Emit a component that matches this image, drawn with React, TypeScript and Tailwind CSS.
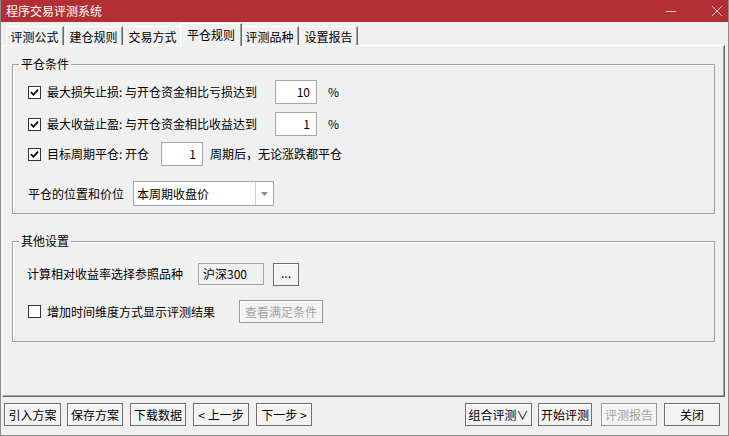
import React from "react"

const tabs = ["评测公式", "建仓规则", "交易方式", "平仓规则", "评测品种", "设置报告"]

function CheckBox({ checked }: { checked: boolean }) {
  return (
    <span className="flex h-[13px] w-[13px] shrink-0 items-center justify-center border border-[#333333] bg-white">
      {checked && (
        <svg width="9" height="9" viewBox="0 0 9 9">
          <path d="M1 4.2 L3.4 6.8 L8 1.6" fill="none" stroke="#000" strokeWidth="1.7" />
        </svg>
      )}
    </span>
  )
}

function NumBox({ value, className = "" }: { value: string; className?: string }) {
  return (
    <div
      className={`flex h-[24px] w-[42px] items-center justify-end border border-[#a6a6a6] bg-white pr-[6px] ${className}`}
    >
      {value}
    </div>
  )
}

function Btn({
  label,
  width,
  disabled,
  className = "",
}: {
  label: React.ReactNode
  width: string
  disabled?: boolean
  className?: string
}) {
  return (
    <button
      type="button"
      className={`flex h-[23px] items-center justify-center border bg-[#f3f3f3] leading-none shadow-[inset_1px_1px_0_#ffffff] ${width} ${
        disabled ? "border-[#9a9a9a] text-[#a3a3a3]" : "border-[#6e6e6e] text-black"
      } ${className}`}
    >
      {label}
    </button>
  )
}

export default function App() {
  return (
    <div className="flex h-[436px] w-[729px] flex-col border-b border-l border-r border-[#8c8c8c] bg-[#f0f0f0] font-['Noto_Sans_CJK_SC','Microsoft_YaHei',sans-serif] text-[12px] leading-none text-black">
      {/* Title bar */}
      <div className="flex h-[22px] shrink-0 items-center bg-[#b42f35] pl-[5px] pr-[4px] text-white">
        <span className="flex-1">程序交易评测系统</span>
        <svg width="12" height="12" viewBox="0 0 12 12" className="mr-[34px]">
          <path d="M1 6.5 H11" stroke="#f3d2d2" strokeWidth="1" />
        </svg>
        <svg width="12" height="12" viewBox="0 0 12 12" className="mr-[1px]">
          <path d="M1 1 L11 11 M11 1 L1 11" stroke="#f3d2d2" strokeWidth="1" />
        </svg>
      </div>

      {/* Tabs */}
      <div className="flex h-[23px] shrink-0 items-end pl-[4px]">
        {tabs.map((t, i) => {
          const active = i === 3
          return (
            <div
              key={t}
              className={
                active
                  ? "relative z-10 -mx-[2px] -mb-px flex h-[23px] w-[62px] items-start justify-center border-l border-r border-t border-l-white border-r-[#696969] border-t-white bg-[#f0f0f0] pt-[5px] shadow-[inset_-1px_0_0_#a0a0a0]"
                  : "flex h-[19px] w-[59px] items-center justify-center border-l border-r border-t border-l-[#e6e6e6] border-r-[#696969] border-t-white bg-[#f0f0f0] pt-[1px] shadow-[inset_-1px_0_0_#a0a0a0,inset_1px_0_0_#ffffff]"
              }
            >
              {t}
            </div>
          )
        })}
      </div>

      {/* Tab panel */}
      <div className="ml-[1px] flex h-[352px] w-[723px] shrink-0 flex-col border border-b-[#696969] border-l-white border-r-[#696969] border-t-white px-[9px] pt-[18px] shadow-[inset_-1px_-1px_0_#a0a0a0]">
        {/* 平仓条件 */}
        <div className="flex h-[150px] flex-col border border-[#a0a0a0] shadow-[inset_1px_1px_0_#ffffff]">
          <div className="-mt-[9px] ml-[6px] h-[16px] w-fit bg-[#f0f0f0] px-[2px] leading-[16px]">平仓条件</div>

          <div className="mt-[8px] flex h-[24px] items-center pl-[15px]">
            <CheckBox checked />
            <span className="ml-[6px] w-[228px]">最大损失止损: 与开仓资金相比亏损达到</span>
            <NumBox value="10" />
            <span className="ml-[11px]">%</span>
          </div>

          <div className="mt-[8px] flex h-[24px] items-center pl-[15px]">
            <CheckBox checked />
            <span className="ml-[6px] w-[228px]">最大收益止盈: 与开仓资金相比收益达到</span>
            <NumBox value="1" />
            <span className="ml-[11px]">%</span>
          </div>

          <div className="mt-[6px] flex h-[24px] items-center pl-[15px]">
            <CheckBox checked />
            <span className="ml-[6px] w-[114px]">目标周期平仓: 开仓</span>
            <NumBox value="1" />
            <span className="ml-[7px]">周期后，无论涨跌都平仓</span>
          </div>

          <div className="mt-[15px] flex h-[25px] items-center pl-[15px]">
            <span className="w-[105px]">平仓的位置和价位</span>
            <div className="flex h-[25px] w-[141px] items-stretch border border-[#a6a6a6] bg-white">
              <span className="flex flex-1 items-center pl-[3px]">本周期收盘价</span>
              <span className="flex w-[18px] items-center justify-center border-l border-[#d0d0d0]">
                <svg width="7" height="4" viewBox="0 0 7 4">
                  <path d="M0 0 H7 L3.5 4 Z" fill="#8a8a8a" />
                </svg>
              </span>
            </div>
          </div>
        </div>

        {/* 其他设置 */}
        <div className="mt-[27px] flex h-[101px] flex-col border border-[#a0a0a0] shadow-[inset_1px_1px_0_#ffffff]">
          <div className="-mt-[9px] ml-[6px] h-[16px] w-fit bg-[#f0f0f0] px-[2px] leading-[16px]">其他设置</div>

          <div className="mt-[14px] flex h-[22px] items-center pl-[14px]">
            <span className="w-[171px]">计算相对收益率选择参照品种</span>
            <div className="flex h-[22px] w-[66px] items-center border border-[#a6a6a6] pl-[4px]">沪深300</div>
            <Btn label="..." width="w-[26px]" className="ml-[9px] h-[20px] pb-[3px]" />
          </div>

          <div className="mt-[16px] flex h-[21px] items-center pl-[15px]">
            <CheckBox checked={false} />
            <span className="ml-[6px] w-[192px]">增加时间维度方式显示评测结果</span>
            <Btn label="查看满足条件" width="w-[84px]" disabled className="h-[21px]" />
          </div>
        </div>
      </div>

      {/* Bottom bar */}
      <div className="flex flex-1 items-start pl-[3px] pt-[6px]">
        <Btn label="引入方案" width="w-[57px]" />
        <Btn label="保存方案" width="w-[56px]" className="ml-[6px]" />
        <Btn label="下载数据" width="w-[56px]" className="ml-[7px]" />
        <Btn label={<span>&lt;&nbsp;上一步</span>} width="w-[56px]" className="ml-[7px]" />
        <Btn label={<span>下一步&nbsp;&gt;</span>} width="w-[56px]" className="ml-[7px]" />
        <Btn label="组合评测∨" width="w-[67px]" className="ml-[153px]" />
        <Btn label="开始评测" width="w-[54px]" className="ml-[6px]" />
        <Btn label="评测报告" width="w-[56px]" disabled className="ml-[9px]" />
        <Btn label="关闭" width="w-[56px]" className="ml-[7px]" />
      </div>
    </div>
  )
}
